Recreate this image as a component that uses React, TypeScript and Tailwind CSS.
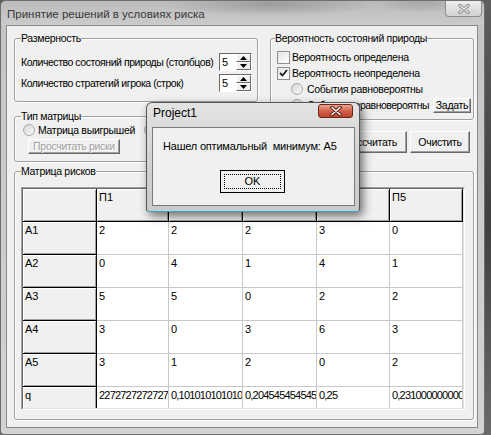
import React from "react";

type Row = { name: string; vals: string[] };

const heads = ["П1", "П2", "П3", "П4", "П5"];

const rows: Row[] = [
  { name: "A1", vals: ["2", "2", "2", "3", "0"] },
  { name: "A2", vals: ["0", "4", "1", "4", "1"] },
  { name: "A3", vals: ["5", "5", "0", "2", "2"] },
  { name: "A4", vals: ["3", "0", "3", "6", "3"] },
  { name: "A5", vals: ["3", "1", "2", "0", "2"] },
  {
    name: "q",
    vals: ["2272727272727", "0,1010101010101", "0,2045454545454", "0,25", "0,2310000000003"],
  },
];

// column widths incl. the 1px grid line
const widths = ["w-[74px]", "w-[72px]", "w-[74px]", "w-[74px]", "w-[73px]", "w-[73px]"];

function GroupBox({
  title,
  className,
  legendClass,
  children,
}: {
  title: string;
  className: string;
  legendClass: string;
  children?: React.ReactNode;
}) {
  return (
    <fieldset
      className={`m-0 min-w-0 rounded-[3px] border border-[#a0a0a0] p-0 shadow-[inset_1px_1px_0_#fff,1px_1px_0_#fff] ${className}`}
    >
      <legend className={`px-0 leading-[13px] ${legendClass}`}>{title}</legend>
      {children}
    </fieldset>
  );
}

function Arrow({ up }: { up?: boolean }) {
  return (
    <svg width="7" height="4" viewBox="0 0 7 4">
      {up ? <path d="M0 4 L3.5 0 L7 4 Z" fill="#000" /> : <path d="M0 0 L3.5 4 L7 0 Z" fill="#000" />}
    </svg>
  );
}

function SpinEdit({ value }: { value: string }) {
  return (
    <div className="flex h-[18px] w-[33px] shrink-0 border border-t-[#696969] border-l-[#696969] border-b-white border-r-white bg-white">
      <div className="flex-1 pl-[2px] text-[11px] leading-[16px]">{value}</div>
      <div className="flex w-[15px] flex-col">
        <div className="flex flex-1 items-center justify-center border border-t-white border-l-white border-b-[#696969] border-r-[#696969] bg-[#f0f0f0]">
          <Arrow up />
        </div>
        <div className="flex flex-1 items-center justify-center border border-t-white border-l-white border-b-[#696969] border-r-[#696969] bg-[#f0f0f0]">
          <Arrow />
        </div>
      </div>
    </div>
  );
}

function CheckBox({ checked }: { checked?: boolean }) {
  return (
    <span className="flex h-[13px] w-[13px] shrink-0 items-center justify-center border border-[#8e8f8f] bg-gradient-to-br from-[#e4e4e4] to-white">
      {checked && (
        <svg width="9" height="8" viewBox="0 0 9 8">
          <path d="M1 4 L3.5 6.5 L8 1" fill="none" stroke="#1c1c1c" strokeWidth="1.8" />
        </svg>
      )}
    </span>
  );
}

function Radio({ checked }: { checked?: boolean }) {
  return (
    <span className="flex h-[12px] w-[12px] shrink-0 items-center justify-center rounded-full border border-[#a8a8a8] bg-gradient-to-br from-[#d6d6d6] to-[#fbfbfb]">
      {checked && <span className="h-[5px] w-[5px] rounded-full bg-[#3a3a3a]" />}
    </span>
  );
}

function ClassicButton({ label, className }: { label: string; className: string }) {
  return (
    <div
      className={`flex items-center justify-center whitespace-nowrap border border-t-white border-l-white border-b-[#696969] border-r-[#696969] bg-[#f0f0f0] shadow-[inset_-1px_-1px_0_#a0a0a0] ${className}`}
    >
      {label}
    </div>
  );
}

function Grid() {
  return (
    <div className="ml-[6px] mt-[9px] h-[223px] w-[444px] border border-t-[#a0a0a0] border-l-[#a0a0a0] border-b-white border-r-white text-[11px] tracking-normal">
      <div className="h-full w-full overflow-hidden border border-t-[#696969] border-l-[#696969] border-b-[#e3e3e3] border-r-[#e3e3e3] bg-[#f0f0f0]">
        <div className="flex h-[33px]">
          {["", ...heads].map((h, i) => (
            <div
              key={i}
              className={`${widths[i]} shrink-0 border-b border-r border-black bg-[#f0f0f0] pl-[2px] pt-[2px] shadow-[inset_1px_1px_0_#fff,inset_-1px_-1px_0_#a0a0a0]`}
            >
              {h}
            </div>
          ))}
        </div>
        {rows.map((r) => (
          <div key={r.name} className={`flex h-[33px] ${r.name === "q" ? "tracking-[-0.8px]" : ""}`}>
            <div
              className={`${widths[0]} shrink-0 border-b border-r border-black bg-[#f0f0f0] pl-[2px] pt-[2px] shadow-[inset_1px_1px_0_#fff,inset_-1px_-1px_0_#a0a0a0]`}
            >
              {r.name}
            </div>
            {r.vals.map((v, i) => (
              <div
                key={i}
                className={`${widths[i + 1]} shrink-0 overflow-hidden whitespace-nowrap border-b border-r border-[#c8c8c8] bg-white pl-[2px] pt-[2px]`}
              >
                {v}
              </div>
            ))}
          </div>
        ))}
      </div>
    </div>
  );
}

function CloseGlyph({ outline, fill }: { outline: string; fill: string }) {
  return (
    <svg width="12" height="10" viewBox="0 0 12 10">
      <path d="M2 1.5 L10 8.5 M10 1.5 L2 8.5" stroke={outline} strokeWidth="3.6" strokeLinecap="round" />
      <path d="M2 1.5 L10 8.5 M10 1.5 L2 8.5" stroke={fill} strokeWidth="1.6" strokeLinecap="round" />
    </svg>
  );
}

function MainWindow() {
  return (
    <div className="flex h-[435px] w-[485px] shrink-0 flex-col overflow-hidden rounded-t-[6px] rounded-b-[4px] border border-[#6e6e6e] bg-gradient-to-b from-[#c4c4c4] to-[#d3d3d3]">
      {/* title bar, glass over a blurred desktop */}
      <div className="flex h-[24px] items-start bg-[radial-gradient(ellipse_110px_12px_at_270px_3px,#9c9c9c,transparent),radial-gradient(ellipse_50px_10px_at_420px_2px,#a8a8a8,transparent),linear-gradient(#bcbcbc,#cbcbcb)]">
        <span className="ml-[6px] mt-[6px] text-[11.5px] leading-[14px] text-[#383838]">
          Принятие решений в условиях риска
        </span>
        <div className="ml-auto mr-[2px] flex h-[16px] w-[37px] items-center justify-center rounded-b-[4px] border border-t-0 border-[#8d8d8d] bg-gradient-to-b from-[#eeeeee] to-[#d2d2d2]">
          <CloseGlyph outline="#8a8a8a" fill="#ececec" />
        </div>
      </div>

      {/* client */}
      <div className="ml-[5px] h-[403px] w-[472px] border border-[#8a8a8a] bg-[#f0f0f0] pl-[7px] pt-[6px] text-[10.5px] tracking-[-0.3px]">
        <div className="flex gap-[12px]">
          <div className="flex w-[244px] flex-col">
            <GroupBox title="Размерность" className="h-[70px]" legendClass="ml-[6px]">
              <div className="flex flex-col gap-[3px] pt-[8px]">
                <div className="flex h-[18px] items-center">
                  <span className="min-w-0 flex-1 whitespace-nowrap pl-[6px] tracking-[-0.45px]">
                    Количество состояний природы (столбцов)
                  </span>
                  <div className="mr-[5px]">
                    <SpinEdit value="5" />
                  </div>
                </div>
                <div className="flex h-[18px] items-center">
                  <span className="min-w-0 flex-1 whitespace-nowrap pl-[6px] tracking-[-0.45px]">
                    Количество стратегий игрока (строк)
                  </span>
                  <div className="mr-[5px]">
                    <SpinEdit value="5" />
                  </div>
                </div>
              </div>
            </GroupBox>

            <GroupBox title="Тип матрицы" className="mt-[8px] h-[52px]" legendClass="ml-[6px]">
              <div className="flex h-[14px] items-center whitespace-nowrap pl-[8px]">
                <Radio />
                <span className="ml-[3px]">Матрица выигрышей</span>
                <span className="ml-[9px]">
                  <Radio checked />
                </span>
                <span className="ml-[3px]">Матрица рисков</span>
              </div>
              <ClassicButton
                label="Просчитать риски"
                className="ml-[13px] mt-[2px] h-[15px] w-[92px] text-[#a0a0a0] [text-shadow:1px_1px_0_#fff]"
              />
            </GroupBox>
          </div>

          <div className="flex w-[204px] flex-col">
            <GroupBox title="Вероятность состояний природы" className="h-[88px]" legendClass="ml-[4px]">
              <div className="flex flex-col pt-[4px]">
                <div className="flex h-[16px] items-center gap-[2px] pl-[6px]">
                  <CheckBox />
                  <span>Вероятность определена</span>
                </div>
                <div className="flex h-[16px] items-center gap-[2px] pl-[6px]">
                  <CheckBox checked />
                  <span>Вероятность неопределена</span>
                </div>
                <div className="flex h-[16px] items-center gap-[4px] pl-[20px]">
                  <Radio />
                  <span className="whitespace-nowrap">События равновероятны</span>
                </div>
                <div className="flex h-[16px] items-center pl-[20px]">
                  <Radio checked />
                  <span className="ml-[4px] min-w-0 flex-1 whitespace-nowrap tracking-[-0.5px]">
                    События неравновероятны
                  </span>
                  <ClassicButton label="Задать" className="mr-[2px] h-[15px] w-[38px] shrink-0" />
                </div>
              </div>
            </GroupBox>
            <div className="mt-[11px] flex h-[22px] justify-end gap-[3px] pr-[4px]">
              <ClassicButton label="Рассчитать" className="h-[22px] w-[72px]" />
              <ClassicButton label="Очистить" className="h-[22px] w-[60px]" />
            </div>
          </div>
        </div>

        <GroupBox title="Матрица рисков" className="mt-[3px] h-[255px] w-[460px]" legendClass="ml-[6px]">
          <Grid />
        </GroupBox>
      </div>
    </div>
  );
}

function MessageBox() {
  return (
    <div className="absolute left-[146px] top-[102px] flex h-[110px] w-[214px] flex-col rounded-t-[6px] rounded-b-[3px] border border-[#555] border-b-[#2fa8c8] bg-gradient-to-b from-[#e3e3e3] via-[#d3d3d3] to-[#cacaca] shadow-[3px_4px_10px_rgba(0,0,0,0.55)]">
      <div className="flex h-[24px] items-start">
        <span className="ml-[6px] mt-[3px] text-[12px] leading-[14px] text-black">Project1</span>
        <div className="ml-auto mr-[6px] mt-[1px] flex h-[14px] w-[35px] items-center justify-center rounded-[3px] border border-[#6b2216] bg-gradient-to-b from-[#e9a493] via-[#d2604a] to-[#c0432d]">
          <CloseGlyph outline="#5a1c12" fill="#ffffff" />
        </div>
      </div>
      <div className="ml-[5px] h-[79px] w-[203px] border border-[#7a7a7a] bg-[#f0f0f0]">
        <div className="whitespace-pre pl-[10px] pt-[12px] tracking-[-0.2px]">Нашел оптимальный  минимум: А5</div>
        <div className="ml-[67px] mt-[17px] flex h-[23px] w-[65px] items-center justify-center border border-black bg-[#f0f0f0]">
          <div className="flex h-[15px] w-[57px] items-center justify-center border border-dotted border-black">
            OK
          </div>
        </div>
      </div>
    </div>
  );
}

export default function App() {
  return (
    <div className="relative flex h-[435px] w-[491px] overflow-hidden bg-gradient-to-b from-[#5e5e5e] via-[#3f3f3f] to-[#6a6a6a] font-['Liberation_Sans',Arial,sans-serif] text-[11px] leading-[13px] text-black">
      <MainWindow />
      <MessageBox />
    </div>
  );
}
